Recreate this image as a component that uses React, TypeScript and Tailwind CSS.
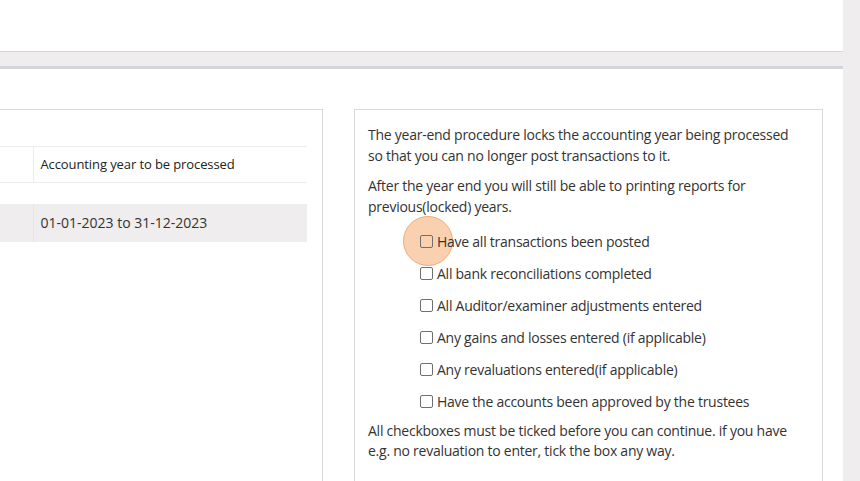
const checks = [
  'Have all transactions been posted',
  'All bank reconciliations completed',
  'All Auditor/examiner adjustments entered',
  'Any gains and losses entered (if applicable)',
  'Any revaluations entered(if applicable)',
  'Have the accounts been approved by the trustees',
];

export default function App() {
  return (
    <div
      className="flex h-[481px] w-[860px] overflow-hidden bg-white text-[14px] text-[#333333] tracking-[-0.25px]"
      style={{ fontFamily: '"Open Sans", "Noto Sans", sans-serif' }}
    >
      <div className="flex w-[843px] flex-col">
        {/* top bar */}
        <div className="h-[52px] shrink-0 border-b border-[#d6d6d6] bg-white" />
        <div className="h-[14px] shrink-0 border-b-[3px] border-[#d4d5da] bg-[#efedee] box-content" />

        {/* content */}
        <div className="flex flex-1 gap-[31px] pt-[40px]">
          {/* left panel */}
          <div className="w-[323px] shrink-0 border-t border-r border-[#d9d9d9] pt-[36px]">
            <table className="w-[307px] border-collapse">
              <tbody>
                <tr className="h-[36px] border-y border-[#ededed]">
                  <td className="w-[33px] border-r border-[#ededed]" />
                  <td className="pl-[7px] text-[13px] tracking-[-0.1px] text-[#222]">Accounting year to be processed</td>
                </tr>
                <tr className="h-[21px]">
                  <td colSpan={2} />
                </tr>
                <tr className="h-[38px] bg-[#efedee]">
                  <td className="w-[33px] border-r border-[#e6e4e5]" />
                  <td className="pl-[7px] tracking-normal text-[#333]">01-01-2023 to 31-12-2023</td>
                </tr>
              </tbody>
            </table>
          </div>

          {/* right panel */}
          <div className="w-[469px] shrink-0 border-t border-l border-r border-[#d9d9d9] pl-[13px] pr-[26px] pt-[14px] leading-[21px]">
            <p>
              The year-end procedure locks the accounting year being processed so that you can no longer post
              transactions to it.
            </p>
            <p className="mt-[9px]">
              After the year end you will still be able to printing reports for previous(locked) years.
            </p>
            <div className="mt-[8px] pl-[52px]">
              {checks.map((label, i) => (
                <div key={label} className="relative flex h-[32px] items-center">
                  {i === 0 && (
                    <span className="absolute left-[-17px] top-[-9px] h-[50px] w-[50px] rounded-full border-[1.5px] border-[#f4aa74] bg-[#f7b27c]/60" />
                  )}
                  <span className="relative h-[13px] w-[13px] shrink-0 rounded-[2px] border border-[#6f6f6f] bg-transparent" />
                  <span className="relative ml-[4px]">{label}</span>
                </div>
              ))}
            </div>
            <p className="mt-[4px] leading-[20px]">
              All checkboxes must be ticked before you can continue. if you have e.g. no revaluation to enter, tick
              the box any way.
            </p>
          </div>
        </div>
      </div>
      <div className="w-[17px] shrink-0 bg-[#efedee]" />
    </div>
  );
}
